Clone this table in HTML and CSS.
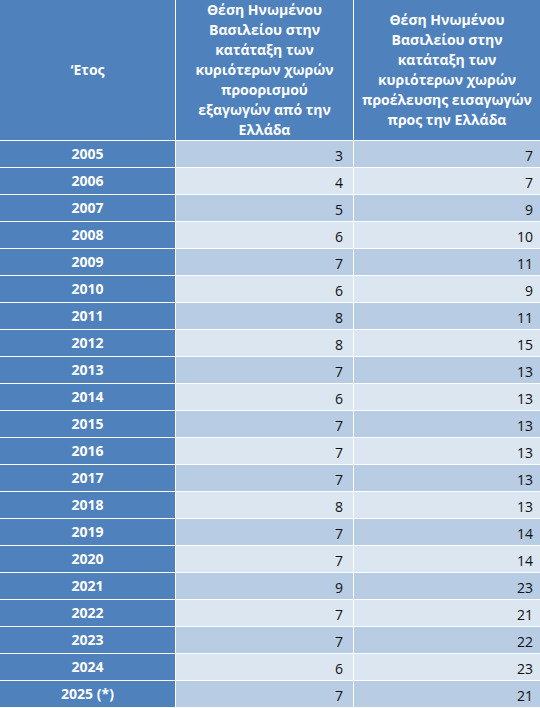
FILE: index.html
```html
<!DOCTYPE html>
<html lang="el">
<head>
<meta charset="utf-8">
<title>Θέση Ηνωμένου Βασιλείου</title>
<link rel="stylesheet" href="styles.css">
</head>
<body>
<div class="table">
  <div class="hd hd-year">‘Ετος</div>
  <div class="hd">Θέση Ηνωμένου<br>Βασιλείου στην<br>κατάταξη των<br>κυριότερων χωρών<br>προορισμού<br>εξαγωγών από την<br>Ελλάδα</div>
  <div class="hd">Θέση Ηνωμένου<br>Βασιλείου στην<br>κατάταξη των<br>κυριότερων χωρών<br>προέλευσης εισαγωγών<br>προς την Ελλάδα</div>

  <div class="yr">2005</div><div class="n c2 dk">3</div><div class="n c3 dk">7</div>
  <div class="yr">2006</div><div class="n c2 lt">4</div><div class="n c3 lt">7</div>
  <div class="yr">2007</div><div class="n c2 dk">5</div><div class="n c3 dk">9</div>
  <div class="yr">2008</div><div class="n c2 lt">6</div><div class="n c3 lt">10</div>
  <div class="yr">2009</div><div class="n c2 dk">7</div><div class="n c3 dk">11</div>
  <div class="yr">2010</div><div class="n c2 lt">6</div><div class="n c3 lt">9</div>
  <div class="yr">2011</div><div class="n c2 dk">8</div><div class="n c3 dk">11</div>
  <div class="yr">2012</div><div class="n c2 lt">8</div><div class="n c3 lt">15</div>
  <div class="yr">2013</div><div class="n c2 dk">7</div><div class="n c3 dk">13</div>
  <div class="yr">2014</div><div class="n c2 lt">6</div><div class="n c3 lt">13</div>
  <div class="yr">2015</div><div class="n c2 dk">7</div><div class="n c3 dk">13</div>
  <div class="yr">2016</div><div class="n c2 lt">7</div><div class="n c3 lt">13</div>
  <div class="yr">2017</div><div class="n c2 dk">7</div><div class="n c3 dk">13</div>
  <div class="yr">2018</div><div class="n c2 lt">8</div><div class="n c3 lt">13</div>
  <div class="yr">2019</div><div class="n c2 dk">7</div><div class="n c3 dk">14</div>
  <div class="yr">2020</div><div class="n c2 lt">7</div><div class="n c3 lt">14</div>
  <div class="yr">2021</div><div class="n c2 dk">9</div><div class="n c3 dk">23</div>
  <div class="yr">2022</div><div class="n c2 lt">7</div><div class="n c3 lt">21</div>
  <div class="yr">2023</div><div class="n c2 dk">7</div><div class="n c3 dk">22</div>
  <div class="yr">2024</div><div class="n c2 lt">6</div><div class="n c3 lt">23</div>
  <div class="yr">2025 (*)</div><div class="n c2 dk">7</div><div class="n c3 dk">21</div>
</div>
</body>
</html>
```
FILE: styles.css
```css
html, body {
  margin: 0;
  padding: 0;
  background: #ffffff;
}
body {
  font-family: "Open Sans", "Noto Sans", sans-serif;
  font-size: 14px;
  overflow: hidden;
}
.table {
  display: grid;
  grid-template-columns: 175px 177px 1fr;
  grid-template-rows: 140px;
  grid-auto-rows: 26px;
  gap: 1px;
  background: #ffffff;
}
.hd {
  background: #4f81bd;
  color: #ffffff;
  font-weight: 700;
  line-height: 20px;
  text-align: center;
  display: flex;
  align-items: center;
  justify-content: center;
}
.yr {
  background: #4f81bd;
  color: #ffffff;
  font-weight: 700;
  text-align: center;
  line-height: 26px;
}
.n {
  color: #111111;
  text-align: right;
  display: flex;
  align-items: flex-end;
  justify-content: flex-end;
  line-height: 20px;
  padding-bottom: 1px;
}
.c2 { padding-right: 10px; }
.c3 { padding-right: 7px; }
.dk { background: #b8cce4; }
.lt { background: #dce6f1; }
```
